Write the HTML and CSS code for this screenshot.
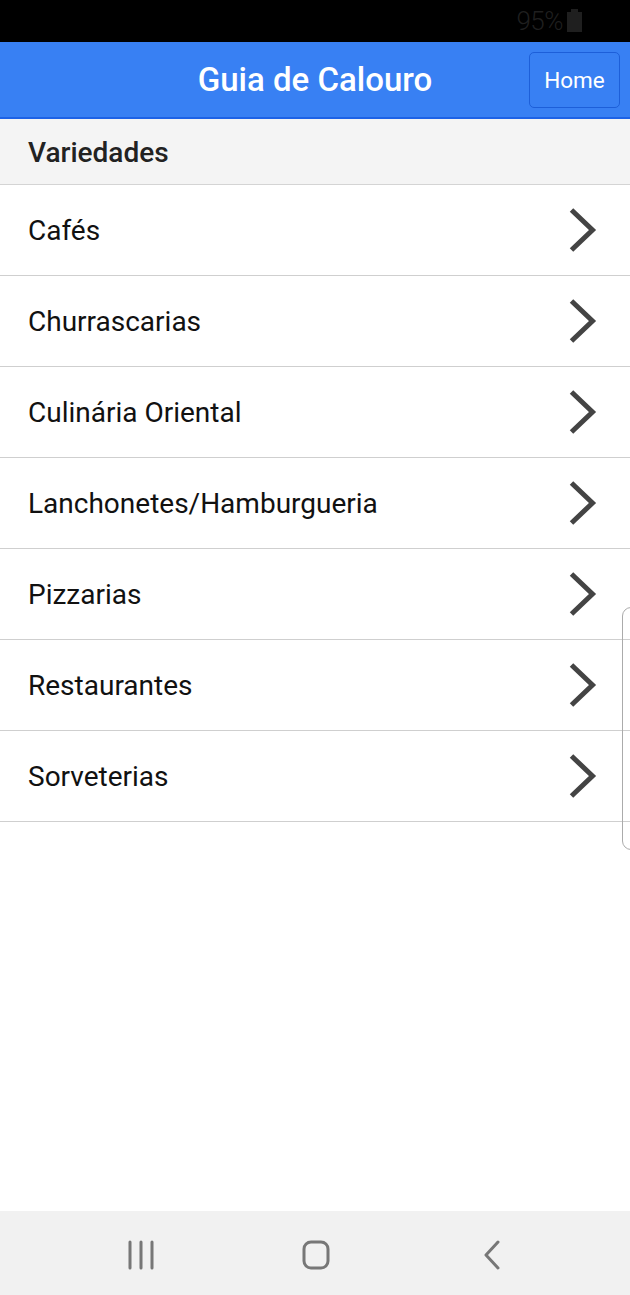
FILE: index.html
```html
<!DOCTYPE html>
<html lang="pt">
<head>
<meta charset="utf-8">
<title>Guia de Calouro</title>
<link rel="stylesheet" href="styles.css">
</head>
<body>
<div class="screen">
  <div class="status-bar">
    <span class="battery-text">95%</span>
    <span class="battery-icon"></span>
  </div>
  <header class="toolbar">
    <div class="toolbar-start"></div>
    <h1 class="title">Guia de Calouro</h1>
    <div class="toolbar-end"><button class="home-btn">Home</button></div>
  </header>
  <main class="content">
    <div class="list-header">Variedades</div>
    <ul class="list">
      <li class="item"><span>Cafés</span><svg class="chev" viewBox="0 0 30 48"><path d="M4 4 L25 24 L4 44"/></svg></li>
      <li class="item"><span>Churrascarias</span><svg class="chev" viewBox="0 0 30 48"><path d="M4 4 L25 24 L4 44"/></svg></li>
      <li class="item"><span>Culinária Oriental</span><svg class="chev" viewBox="0 0 30 48"><path d="M4 4 L25 24 L4 44"/></svg></li>
      <li class="item"><span>Lanchonetes/Hamburgueria</span><svg class="chev" viewBox="0 0 30 48"><path d="M4 4 L25 24 L4 44"/></svg></li>
      <li class="item"><span>Pizzarias</span><svg class="chev" viewBox="0 0 30 48"><path d="M4 4 L25 24 L4 44"/></svg></li>
      <li class="item"><span>Restaurantes</span><svg class="chev" viewBox="0 0 30 48"><path d="M4 4 L25 24 L4 44"/></svg></li>
      <li class="item"><span>Sorveterias</span><svg class="chev" viewBox="0 0 30 48"><path d="M4 4 L25 24 L4 44"/></svg></li>
    </ul>
    <div class="edge-panel"></div>
  </main>
  <nav class="nav-bar">
    <svg class="nav-icon" viewBox="0 0 30 30"><path d="M4 2 V28 M15 2 V28 M26 2 V28"/></svg>
    <svg class="nav-icon" viewBox="0 0 30 30"><rect x="3" y="2" width="24" height="26" rx="7" ry="7"/></svg>
    <svg class="nav-icon" viewBox="0 0 30 30"><path d="M22 2 L10 15 L22 28"/></svg>
  </nav>
</div>
</body>
</html>
```

FILE: styles.css
```css
* { box-sizing: border-box; }
html, body { margin: 0; padding: 0; }
body {
  font-family: Roboto, "Noto Sans", sans-serif;
  background: #fff;
}
.screen {
  width: 630px;
  height: 1295px;
  display: flex;
  flex-direction: column;
  overflow: hidden;
}
.status-bar {
  height: 42px;
  background: #000;
  display: flex;
  align-items: center;
  justify-content: flex-end;
  padding-right: 48px;
  gap: 4px;
}
.battery-text {
  color: #1f1f1f;
  font-size: 26px;
  font-weight: 300;
  letter-spacing: -0.5px;
}
.battery-icon {
  width: 15px;
  height: 20px;
  background: #1f1f1f;
  position: relative;
  margin-top: 1px;
}
.battery-icon::before {
  content: "";
  position: absolute;
  top: -3px;
  left: 4px;
  width: 7px;
  height: 3px;
  background: #1f1f1f;
}
.toolbar {
  height: 77px;
  background: #3880f3;
  border-bottom: 2px solid #1d62e6;
  display: grid;
  grid-template-columns: 1fr auto 1fr;
  align-items: center;
}
.title {
  margin: 0;
  color: #fff;
  font-size: 33px;
  font-weight: 500;
  letter-spacing: 0;
}
.toolbar-end {
  display: flex;
  justify-content: flex-end;
  padding-right: 10px;
}
.home-btn {
  width: 91px;
  height: 56px;
  background: #3880f3;
  border: 1px solid #1d5fd9;
  border-radius: 5px;
  color: #fff;
  font-family: Roboto, "Noto Sans", sans-serif;
  font-size: 22.5px;
  font-weight: 400;
  padding: 0;
  margin-top: 1px;
}
.content {
  flex: 1;
  position: relative;
}
.list-header {
  height: 66px;
  background: #f4f4f4;
  border-bottom: 1px solid #d4d4d4;
  padding-left: 28px;
  display: flex;
  align-items: center;
  font-size: 28px;
  font-weight: 500;
  color: #222;
  padding-top: 2px;
}
.list {
  list-style: none;
  margin: 0;
  padding: 0;
}
.item {
  height: 91px;
  border-bottom: 1px solid #cfcfcf;
  display: flex;
  align-items: center;
  justify-content: space-between;
  padding-left: 28px;
  padding-right: 32px;
  font-size: 28px;
  color: #111;
}
.chev {
  width: 31px;
  height: 48px;
}
.chev path {
  fill: none;
  stroke: #444;
  stroke-width: 5;
  stroke-linecap: butt;
  stroke-linejoin: miter;
}
.edge-panel {
  position: absolute;
  left: 622px;
  top: 488px;
  width: 20px;
  height: 243px;
  border: 1.5px solid #ababab;
  border-radius: 9px;
}
.nav-bar {
  height: 84px;
  background: #f1f1f1;
  display: flex;
  align-items: center;
  justify-content: space-between;
  padding: 3px 124px 0 126px;
}
.nav-icon {
  width: 30px;
  height: 30px;
}
.nav-icon path, .nav-icon rect {
  fill: none;
  stroke: #777;
  stroke-width: 3;
  stroke-linecap: round;
  stroke-linejoin: round;
}
```
